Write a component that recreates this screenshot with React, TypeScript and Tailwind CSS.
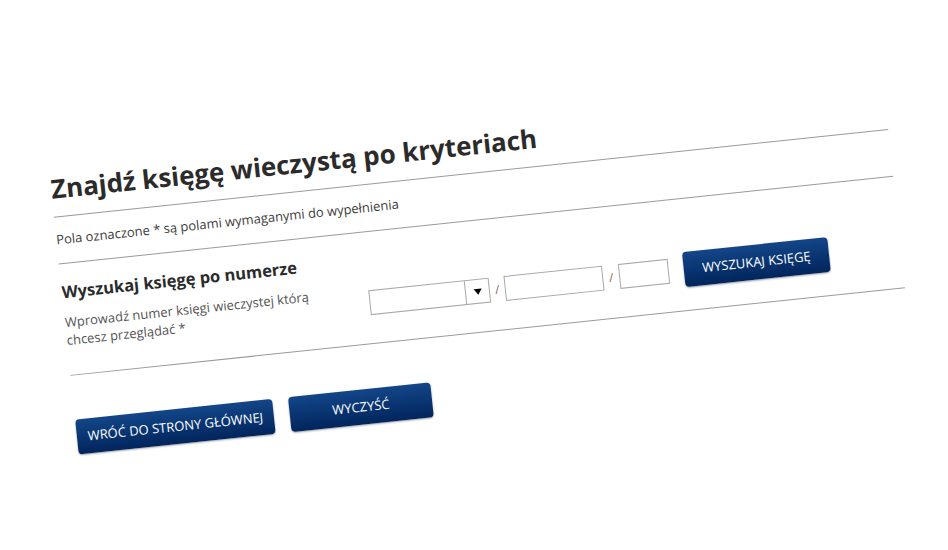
import React from "react";

const btn =
  "h-[35px] rounded-[4px] bg-gradient-to-b from-[#134689] to-[#03255c] text-white text-[13px] uppercase flex items-center justify-center shadow-[0_1px_2px_rgba(0,0,0,0.35)]";

export default function App() {
  return (
    <div
      className="w-full h-[550px] overflow-hidden bg-white pl-[49px] pt-[157px]"
      style={{ fontFamily: '"Open Sans", "Noto Sans", sans-serif' }}
    >
      <div className="w-[839px] origin-top-left -rotate-6">
        <h1 className="mt-[14px] pb-[10px] border-b border-[#9a9a9a] text-[26px] leading-[36px] font-bold text-[#2b2b2b]">
          Znajdź księgę wieczystą po kryteriach
        </h1>
        <p className="pt-[13px] pb-[15px] border-b border-[#9a9a9a] text-[13px] leading-[18px] text-[#3d3d3d]">
          Pola oznaczone * są polami wymaganymi do wypełnienia
        </p>
        <div className="flex pt-[16px] pb-[23px] border-b border-[#9a9a9a]">
          <div className="w-[305px] shrink-0">
            <h2 className="text-[16.5px] leading-[24px] font-bold text-[#2b2b2b]">
              Wyszukaj księgę po numerze
            </h2>
            <p className="mt-[9px] w-[262px] text-[13px] leading-[18px] text-[#555]">
              Wprowadź numer księgi wieczystej którą chcesz przeglądać *
            </p>
          </div>
          <div className="flex items-center self-start mt-[37px] h-[35px]">
            <div className="w-[121px] h-[25px] border border-[#a8a8a8] flex bg-white">
              <div className="flex-1" />
              <div className="w-[24px] border-l border-[#a8a8a8] flex items-center justify-center">
                <span className="block w-0 h-0 border-l-[4px] border-r-[4px] border-t-[6px] border-l-transparent border-r-transparent border-t-black" />
              </div>
            </div>
            <span className="w-[15px] text-center text-[12px] text-[#8a6a4a]">/</span>
            <div className="w-[99px] h-[25px] border border-[#a8a8a8] bg-white" />
            <span className="w-[16px] text-center text-[12px] text-[#8a6a4a]">/</span>
            <div className="w-[50px] h-[25px] border border-[#a8a8a8] bg-white" />
            <button className={`${btn} w-[146px] ml-[15px]`}>Wyszukaj księgę</button>
          </div>
        </div>
        <div className="flex gap-[16px] mt-[44px]">
          <button className={`${btn} w-[198px]`}>Wróć do strony głównej</button>
          <button className={`${btn} w-[143px]`}>Wyczyść</button>
        </div>
      </div>
    </div>
  );
}
